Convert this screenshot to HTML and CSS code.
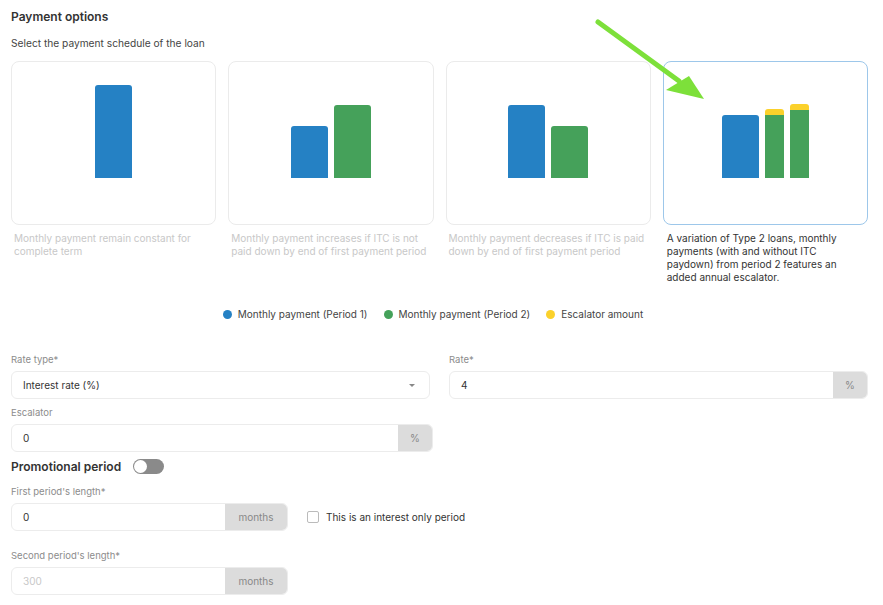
FILE: index.html
```html
<!DOCTYPE html>
<html lang="en">
<head>
<meta charset="utf-8">
<link rel="stylesheet" href="styles.css">
</head>
<body>
<div class="page">
  <h2 class="title">Payment options</h2>
  <p class="subtitle">Select the payment schedule of the loan</p>

  <div class="cards">
    <div class="option">
      <div class="card">
        <div class="bar blue" style="height:93px"></div>
      </div>
      <p class="desc">Monthly payment remain constant for complete term</p>
    </div>
    <div class="option">
      <div class="card">
        <div class="bar blue" style="height:52px"></div>
        <div class="bar green" style="height:73px"></div>
      </div>
      <p class="desc">Monthly payment increases if ITC is not paid down by end of first payment period</p>
    </div>
    <div class="option">
      <div class="card">
        <div class="bar blue" style="height:73px"></div>
        <div class="bar green" style="height:52px"></div>
      </div>
      <p class="desc">Monthly payment decreases if ITC is paid down by end of first payment period</p>
    </div>
    <div class="option selected">
      <div class="card">
        <div class="bar blue" style="height:63px"></div>
        <div class="stack narrow">
          <div class="cap"></div>
          <div class="fill green" style="height:63px"></div>
        </div>
        <div class="stack narrow">
          <div class="cap"></div>
          <div class="fill green" style="height:68px"></div>
        </div>
      </div>
      <p class="desc">A variation of Type 2 loans, monthly payments (with and without ITC paydown) from period 2 features an added annual escalator.</p>
    </div>
  </div>

  <div class="legend">
    <span class="legend-item"><span class="dot blue"></span>Monthly payment (Period 1)</span>
    <span class="legend-item"><span class="dot green"></span>Monthly payment (Period 2)</span>
    <span class="legend-item"><span class="dot yellow"></span>Escalator amount</span>
  </div>

  <div class="row two">
    <div class="field">
      <label class="label">Rate type*</label>
      <div class="input select">
        <span class="value">Interest rate (%)</span>
        <span class="caret"></span>
      </div>
    </div>
    <div class="field">
      <label class="label">Rate*</label>
      <div class="input">
        <span class="value">4</span>
        <span class="suffix pct">%</span>
      </div>
    </div>
  </div>

  <div class="field escalator">
    <label class="label">Escalator</label>
    <div class="input">
      <span class="value">0</span>
      <span class="suffix pct">%</span>
    </div>
  </div>

  <div class="promo">
    <span class="promo-title">Promotional period</span>
    <span class="toggle"><span class="knob"></span></span>
  </div>

  <div class="field period">
    <label class="label">First period's length*</label>
    <div class="period-row">
      <div class="input short">
        <span class="value">0</span>
        <span class="suffix months">months</span>
      </div>
      <label class="check"><span class="box"></span>This is an interest only period</label>
    </div>
  </div>

  <div class="field period second">
    <label class="label">Second period's length*</label>
    <div class="input short">
      <span class="value placeholder">300</span>
      <span class="suffix months">months</span>
    </div>
  </div>

  <svg class="arrow" width="130" height="100" viewBox="0 0 130 100">
    <line x1="7" y1="7" x2="88" y2="66" stroke="#7de03a" stroke-width="5" stroke-linecap="round"/>
    <polygon points="113,84 75,75 98,61" fill="#7de03a"/>
  </svg>
</div>
</body>
</html>
```

FILE: styles.css
```css
* { box-sizing: border-box; }
html, body { margin: 0; padding: 0; background: #fff; }
body {
  font-family: Inter, "Noto Sans", "Liberation Sans", sans-serif;
  color: #333;
  width: 883px;
  height: 605px;
  overflow: hidden;
}
.page {
  position: relative;
  padding: 9px 15px 0 11px;
}
.title {
  margin: 0;
  font-size: 12px;
  line-height: 16px;
  font-weight: 600;
  color: #333;
}
.subtitle {
  margin: 11px 0 0;
  font-size: 10.2px;
  line-height: 14px;
  color: #444;
}
.cards {
  margin-top: 11px;
  display: grid;
  grid-template-columns: repeat(4, 1fr);
  gap: 12px;
  width: 857px;
}
.card {
  height: 164px;
  border: 1px solid #ebebeb;
  border-radius: 8px;
  display: flex;
  align-items: flex-end;
  justify-content: center;
  gap: 6px;
  padding-bottom: 46px;
}
.selected .card { border-color: #9dc7ea; }
.bar {
  width: 37px;
  border-radius: 3px 3px 0 0;
}
.blue { background: #2581c4; }
.green { background: #45a15a; }
.yellow { background: #fbd12b; }
.stack {
  display: flex;
  flex-direction: column;
}
.stack.narrow { width: 19px; }
.cap {
  height: 6px;
  background: #fbd12b;
  border-radius: 3px 3px 0 0;
}
.fill { width: 100%; }
.desc {
  margin: 7px 0 0 3px;
  font-size: 10px;
  line-height: 13px;
  color: #c8c8c8;
}
.selected .desc { color: #333; margin-left: 4px; max-width: 176px; }

.legend {
  margin-top: 23px;
  display: flex;
  justify-content: center;
  gap: 16px;
  font-size: 10px;
  line-height: 14px;
  color: #444;
  padding-right: 13px;
}
.legend-item { display: flex; align-items: center; }
.dot {
  width: 9px;
  height: 9px;
  border-radius: 50%;
  margin-right: 6px;
}

.row.two {
  margin-top: 32px;
  display: grid;
  grid-template-columns: 419px 419px;
  gap: 19px;
}
.field { display: flex; flex-direction: column; }
.label {
  font-size: 9.5px;
  line-height: 13px;
  color: #8c8c8c;
  margin-bottom: 5px;
}
.input {
  height: 28px;
  border: 1px solid #ececec;
  border-radius: 6px;
  display: flex;
  align-items: center;
  overflow: hidden;
  font-size: 10px;
  color: #333;
}
.value { flex: 1; padding-left: 11px; }
.placeholder { color: #c8c8c8; }
.caret {
  width: 0; height: 0;
  border-left: 3px solid transparent;
  border-right: 3px solid transparent;
  border-top: 3px solid #888;
  margin-right: 14px;
}
.suffix {
  align-self: stretch;
  display: flex;
  align-items: center;
  justify-content: center;
  background: #dcdcdc;
  color: #888;
}
.suffix.pct { width: 34px; }
.suffix.months { width: 62px; }

.escalator { margin-top: 7px; width: 422px; }
.promo {
  margin-top: 6px;
  display: flex;
  align-items: center;
  height: 16px;
}
.promo-title {
  font-size: 12px;
  font-weight: 600;
  color: #333;
}
.toggle {
  margin-left: 12px;
  width: 31px;
  height: 15px;
  border-radius: 8px;
  background: #8a8a8a;
  position: relative;
  display: inline-block;
}
.knob {
  position: absolute;
  left: 1px;
  top: 1px;
  width: 13px;
  height: 13px;
  border-radius: 50%;
  background: #fff;
}
.period { margin-top: 11px; }
.period.second { margin-top: 18px; }
.period-row { display: flex; align-items: center; }
.input.short { width: 277px; }
.check {
  margin-left: 19px;
  display: flex;
  align-items: center;
  font-size: 10px;
  color: #333;
}
.box {
  width: 12px;
  height: 12px;
  border: 1px solid #bbb;
  border-radius: 2px;
  margin-right: 7px;
}
.arrow {
  position: absolute;
  left: 591px;
  top: 15px;
}
```
